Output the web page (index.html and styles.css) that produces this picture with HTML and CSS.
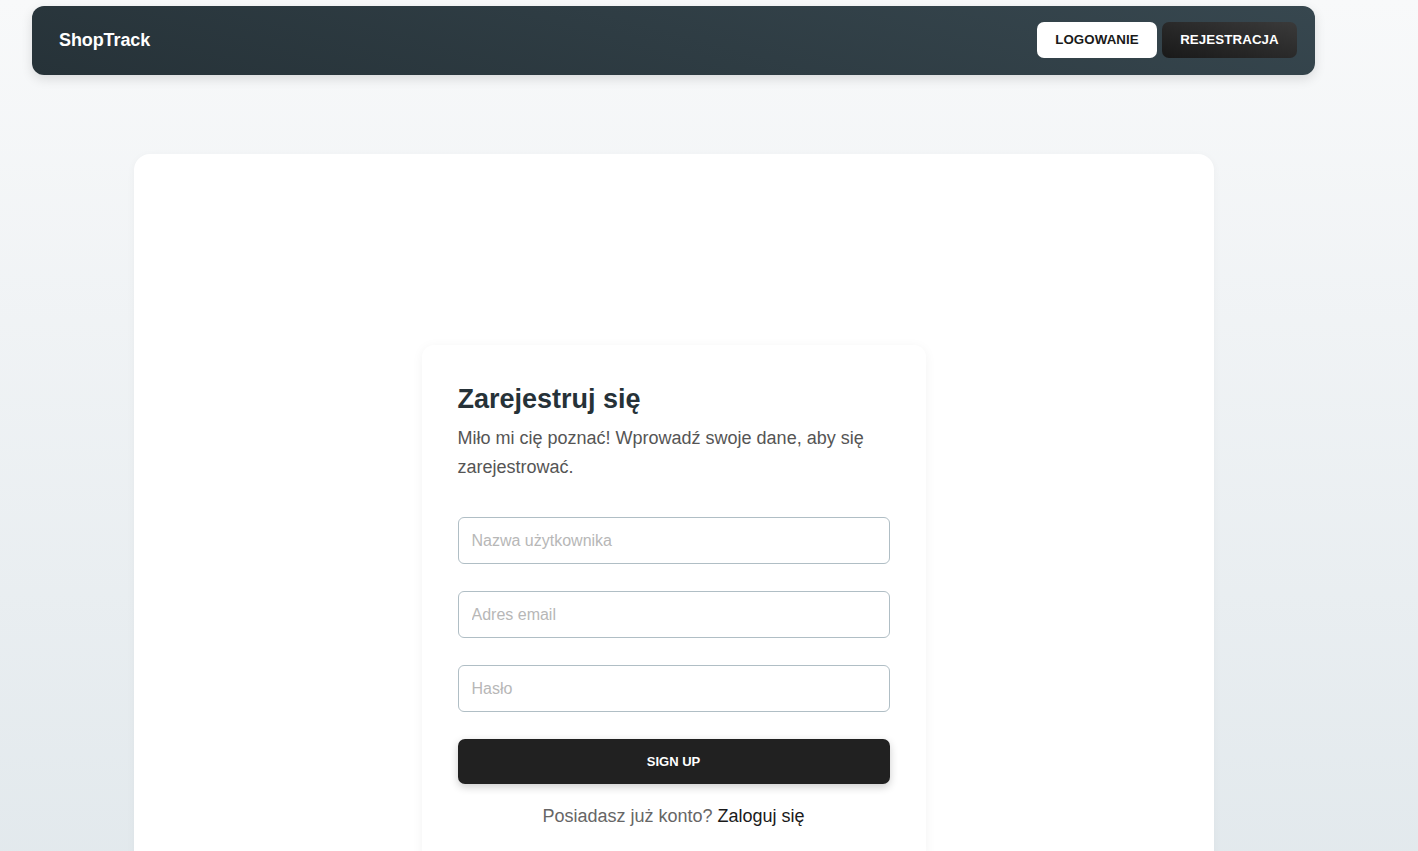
FILE: index.html
```html
<!DOCTYPE html>
<html lang="pl">
<head>
<meta charset="utf-8">
<title>ShopTrack - Rejestracja</title>
<link rel="stylesheet" href="styles.css">
</head>
<body>
<div class="page">
  <header class="navbar">
    <div class="brand">ShopTrack</div>
    <nav class="nav-actions">
      <a class="btn btn-light" href="#">Logowanie</a>
      <a class="btn btn-dark" href="#">Rejestracja</a>
    </nav>
  </header>
  <main class="card">
    <section class="form-card">
      <h1 class="title">Zarejestruj się</h1>
      <p class="subtitle">Miło mi cię poznać! Wprowadź swoje dane, aby się zarejestrować.</p>
      <form class="form">
        <input class="field" type="text" placeholder="Nazwa użytkownika">
        <input class="field" type="email" placeholder="Adres email">
        <input class="field" type="password" placeholder="Hasło">
        <button class="submit" type="button">Sign up</button>
      </form>
      <p class="switch">Posiadasz już konto? <a href="#">Zaloguj się</a></p>
    </section>
  </main>
</div>
</body>
</html>
```

FILE: styles.css
```css
* { box-sizing: border-box; }
html, body { margin: 0; padding: 0; }
body {
  font-family: "Liberation Sans", Arial, sans-serif;
  background: linear-gradient(180deg, #f8f9fa 0%, #e1e8ec 100%);
  min-height: 100vh;
  color: #263238;
}
.page {
  width: 1283px;
  margin-left: 32px;
  padding-top: 6px;
}
.navbar {
  height: 69px;
  border-radius: 12px;
  background: linear-gradient(195deg, #37474f 0%, #263238 100%);
  box-shadow: 0 4px 12px rgba(0,0,0,0.12);
  display: flex;
  align-items: center;
  justify-content: space-between;
  padding: 0 18px 0 27px;
}
.brand {
  color: #fff;
  font-weight: 700;
  font-size: 18px;
  letter-spacing: -0.1px;
}
.nav-actions { display: flex; gap: 5px; margin-top: -2px; }
.btn {
  display: inline-flex;
  align-items: center;
  justify-content: center;
  height: 36px;
  border-radius: 7px;
  font-size: 13.3px;
  font-weight: 700;
  text-transform: uppercase;
  text-decoration: none;
  letter-spacing: 0.1px;
}
.btn-light { width: 120px; background: #fff; color: #1a1a1a; }
.btn-dark {
  width: 135px;
  background: linear-gradient(195deg, #3a3a3a 0%, #191919 100%);
  color: #fff;
}
.card {
  width: 1080px;
  margin: 79px auto 0;
  background: #fff;
  border-radius: 16px;
  box-shadow: 0 2px 8px rgba(0,0,0,0.04);
  padding: 191px 0 40px;
  min-height: 760px;
}
.form-card {
  width: 504px;
  margin: 0 auto;
  background: #fff;
  border-radius: 12px;
  box-shadow: 0 2px 12px rgba(0,0,0,0.05);
  padding: 37px 36px 36px;
}
.title {
  margin: 0;
  font-size: 27px;
  font-weight: 700;
  line-height: 34px;
  color: #263238;
}
.subtitle {
  margin: 8px 0 0;
  font-size: 18px;
  line-height: 29px;
  color: #555;
}
.form {
  margin-top: 35px;
  display: flex;
  flex-direction: column;
  gap: 27px;
}
.field {
  width: 100%;
  height: 47px;
  border: 1px solid #b0bec5;
  border-radius: 6px;
  padding: 0 13px;
  font-family: inherit;
  font-size: 16px;
  color: #333;
  background: #fff;
}
.field::placeholder { color: #b7b7b7; }
.submit {
  height: 45px;
  border: 0;
  border-radius: 7px;
  background: #212121;
  color: #fff;
  font-family: inherit;
  font-size: 13px;
  font-weight: 700;
  text-transform: uppercase;
  box-shadow: 0 3px 8px rgba(0,0,0,0.2);
}
.switch {
  margin: 22px 0 0;
  text-align: center;
  font-size: 18px;
  color: #666;
}
.switch a { color: #1a1a1a; text-decoration: none; }
```
